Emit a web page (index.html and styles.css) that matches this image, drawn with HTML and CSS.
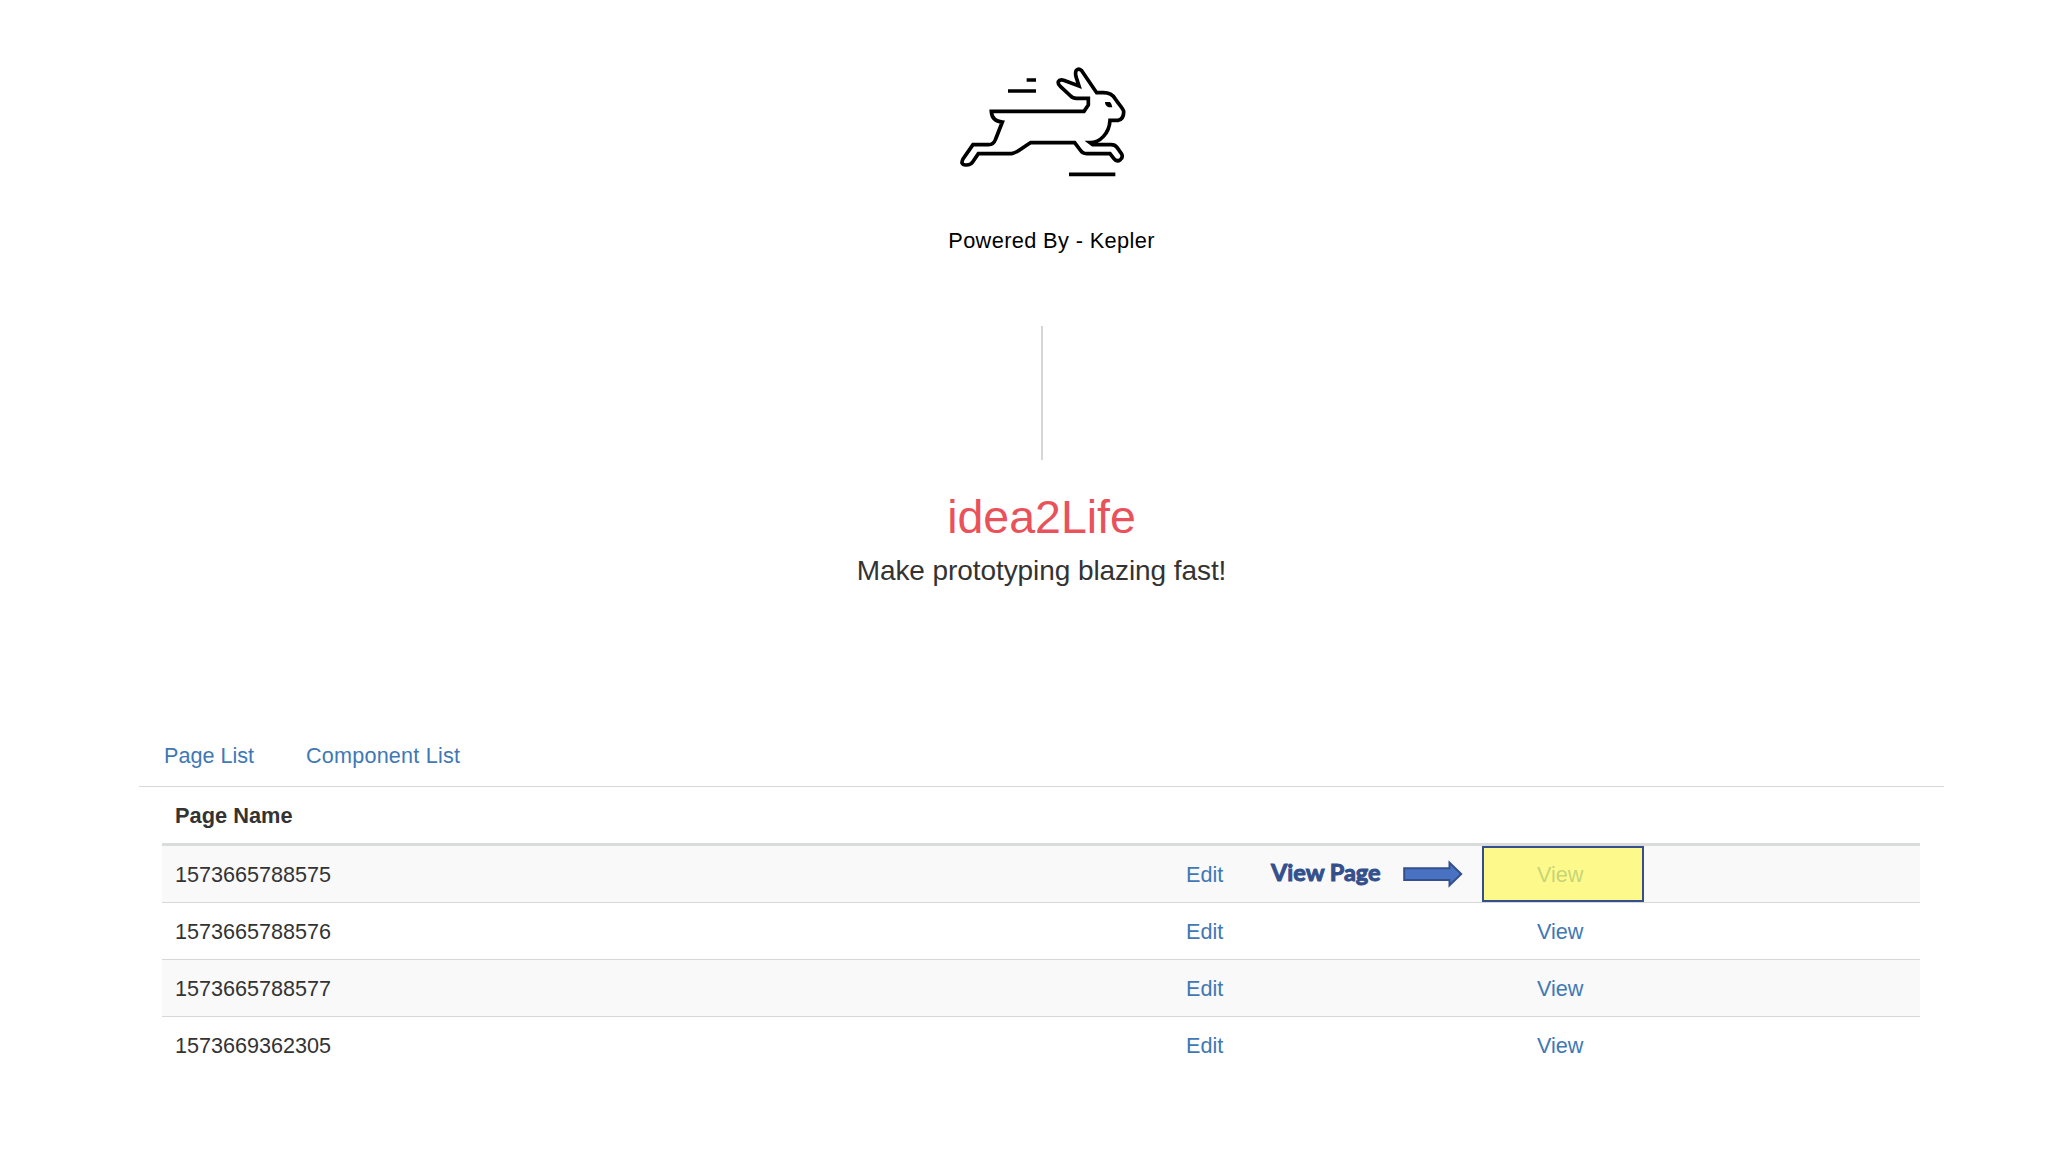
FILE: index.html
```html
<!DOCTYPE html>
<html lang="en">
<head>
<meta charset="utf-8">
<title>idea2Life</title>
<link rel="stylesheet" href="styles.css">
</head>
<body>
<header class="hero">
  <svg class="logo" viewBox="0 0 600 420" fill="none" stroke="#000" stroke-width="11" aria-label="Running rabbit">
    <path d="M260 90h28M204 123h84M387 373h139"/>
    <path d="M432 184H154C155 202 164 214 187 216L167 267Q161 284 146 284H99L69 327Q60 344 77 345Q91 346 98 336L115 311H215C234 308 252 289 272 278H404L420 299Q427 311 440 311H510L521 325Q530 337 541 329Q550 322 545 312L531 292Q525 284 513 284H458L450 278C480 278 508 250 510 211H535Q552 206 551 184Q549 177 536 161L526 147Q515 128 490 128H470L424 61Q416 54 409 61Q405 67 408 80L417 108L371 91Q359 87 355 95Q353 102 361 109L391 137Q397 145 410 145H445V165L432 184H425"/>
    <path d="M495 156h15q7 7 7 16h-11q-11-4-11-16z" fill="#000" stroke="none"/>
  </svg>
  <p class="powered">Powered By - Kepler</p>
  <div class="divider"></div>
  <h1 class="title">idea2Life</h1>
  <p class="tagline">Make prototyping blazing fast!</p>
</header>
<main class="content">
  <nav class="tabs"><a href="#">Page List</a><a class="wide" href="#">Component List</a></nav>
  <div class="table">
    <div class="row head"><span>Page Name</span></div>
    <div class="row striped">
      <span>1573665788575</span><a href="#">Edit</a><a href="#">View</a>
      <div class="callout">
        <span class="callout-label">View Page</span>
        <svg class="arrow" viewBox="0 0 60 28"><path d="M1.2 8.2H46.5V2.6L58.2 14L46.5 25.4V20H1.2Z" fill="#4a72c2" stroke="#34508c" stroke-width="2"/></svg>
        <div class="highlight"></div>
      </div>
    </div>
    <div class="row"><span>1573665788576</span><a href="#">Edit</a><a href="#">View</a></div>
    <div class="row striped"><span>1573665788577</span><a href="#">Edit</a><a href="#">View</a></div>
    <div class="row"><span>1573669362305</span><a href="#">Edit</a><a href="#">View</a></div>
  </div>
</main>
</body>
</html>
```
FILE: styles.css
```css
* { box-sizing: border-box; }
body {
  margin: 0;
  background: #fff;
  color: #333;
  font: 21.6px/31px "Liberation Sans", Arial, sans-serif;
}
a { color: #4078b5; text-decoration: none; }
p, h1 { margin: 0; }

.hero {
  display: flex;
  flex-direction: column;
  align-items: center;
  width: 2083px;
  height: 734px;
  padding-top: 50px;
}
.logo { width: 200px; height: 140px; margin-right: 3px; }
.powered { margin: 35px 0 0 20px; color: #000; font-size: 21.75px; letter-spacing: 0.37px; }
.divider { width: 2px; height: 134px; margin-top: 70px; background: #d6d6d6; }
.title {
  margin-top: 32px;
  color: #e9525a;
  font-size: 46.5px;
  line-height: 51px;
  font-weight: 400;
}
.tagline { margin-top: 11px; font-size: 28px; line-height: 34px; letter-spacing: -0.08px; }

.content { width: 1805px; margin-left: 139px; }
.tabs {
  display: flex;
  gap: 52px;
  height: 53px;
  padding: 6px 25px 0;
  border-bottom: 1.5px solid #d8d8d8;
}
.wide { letter-spacing: 0.2px; }
.table { margin: 0 24px 0 23px; }
.row {
  position: relative;
  display: grid;
  grid-template-columns: 1011px 351px 1fr;
  height: 57px;
  padding: 13px 13px 0;
  border-top: 1px solid #d8d8d8;
}
.head {
  height: 59px;
  border-top: 0;
  border-bottom: 3px solid #dadcdc;
  font-weight: 700;
  font-size: 21.8px;
}
.head + .row { border-top: 0; height: 56px; }
.striped { background: #f9f9f9; }

.callout {
  position: absolute;
  top: 0;
  left: 1109px;
  display: flex;
  align-items: center;
  height: 56px;
}
.callout-label {
  width: 132px;
  padding-bottom: 4px;
  color: #34508c;
  font: 700 23.5px/30px Lato, sans-serif;
  -webkit-text-stroke: 1px #34508c;
}
.arrow { width: 60px; height: 28px; }
.highlight {
  width: 162px;
  height: 56px;
  margin-left: 19px;
  border: 2px solid #34508c;
  background: rgba(255, 251, 93, 0.7);
}
```
